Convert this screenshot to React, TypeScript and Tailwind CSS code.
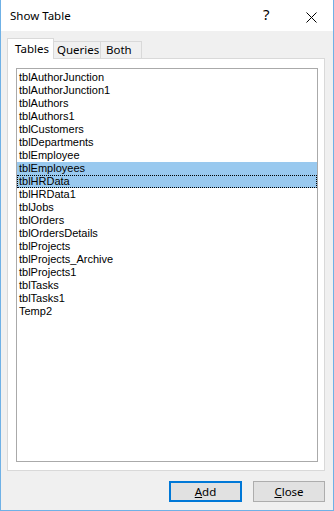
import React from 'react';

const tables = [
  'tblAuthorJunction',
  'tblAuthorJunction1',
  'tblAuthors',
  'tblAuthors1',
  'tblCustomers',
  'tblDepartments',
  'tblEmployee',
  'tblEmployees',
  'tblHRData',
  'tblHRData1',
  'tblJobs',
  'tblOrders',
  'tblOrdersDetails',
  'tblProjects',
  'tblProjects_Archive',
  'tblProjects1',
  'tblTasks',
  'tblTasks1',
  'Temp2',
];

const ui = "font-['Noto_Sans',sans-serif] text-[11.5px] text-black";

export default function App() {
  return (
    <div className={`w-[334px] h-[511px] flex flex-col border-x border-b border-[#6fb1e6] bg-[#f0f0f0] ${ui}`}>
      {/* title bar */}
      <div className="h-[31px] shrink-0 bg-white flex items-center pl-[9px] relative">
        <span className="leading-none">Show Table</span>
        <span className="absolute left-[262px] top-[7px] text-[15px] leading-none">?</span>
        <svg className="absolute left-[305px] top-[12px]" width="11" height="11" viewBox="0 0 11 11">
          <path d="M0.5 0.5 L10.5 10.5 M10.5 0.5 L0.5 10.5" stroke="#000" strokeWidth="1" />
        </svg>
      </div>

      <div className="flex-1 flex flex-col pt-[7px] pl-[6px] pr-[8px] pb-[8px]">
        {/* tabs */}
        <div className="h-[20px] flex items-end">
          <div className="relative z-10 -mb-px h-[21px] w-[47px] bg-white border border-b-0 border-[#d9d9d9] pl-[7px] flex items-center leading-none">
            Tables
          </div>
          <div className="h-[17px] w-[47px] border border-b-0 border-l-0 border-[#d9d9d9] pl-[3px] flex items-center leading-none">
            Queries
          </div>
          <div className="h-[17px] w-[41px] border border-b-0 border-l-0 border-[#d9d9d9] pl-[5px] flex items-center leading-none">
            Both
          </div>
        </div>

        {/* tab panel */}
        <div className="h-[413px] bg-white border border-[#d9d9d9] pt-[9px] pb-[8px] pl-[8px] pr-[6px]">
          <div className="h-[394px] border border-[#aaaaaa] bg-white pt-[2px] font-['Liberation_Sans',Arial,sans-serif] text-[11px]">
            {tables.map((t, i) => {
              const sel = i === 7 || i === 8;
              const focus = i === 8;
              return (
                <div
                  key={t}
                  className={`h-[13px] leading-[13px] pl-[2px] whitespace-nowrap ${sel ? 'bg-[#99c9ef]' : ''} ${
                    focus ? 'outline outline-1 outline-dotted outline-black -outline-offset-1' : ''
                  }`}
                >
                  {t}
                </div>
              );
            })}
          </div>
        </div>

        {/* buttons */}
        <div className="mt-[10px] flex justify-end gap-[11px]">
          <button className="w-[73px] h-[21px] bg-[#e1e1e1] border-2 border-[#0078d7] flex items-center justify-center leading-none">
            <span><span className="underline">A</span>dd</span>
          </button>
          <button className="w-[72px] h-[21px] bg-[#e1e1e1] border border-[#adadad] flex items-center justify-center leading-none">
            <span><span className="underline">C</span>lose</span>
          </button>
        </div>
      </div>
    </div>
  );
}
